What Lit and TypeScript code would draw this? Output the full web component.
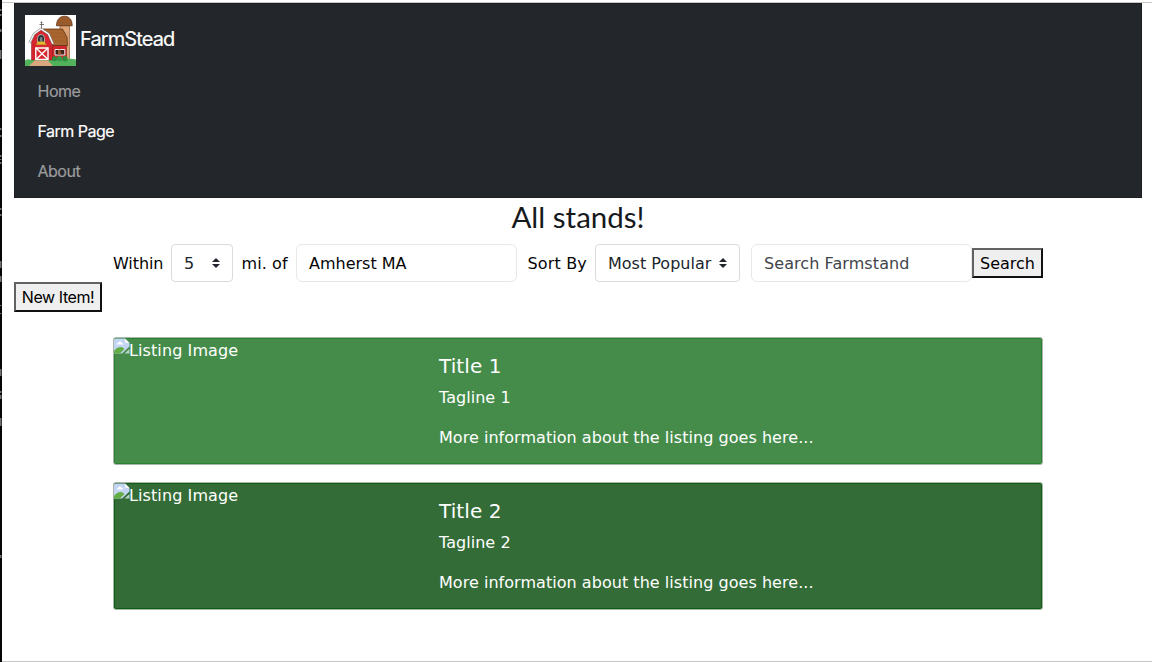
import { LitElement, html, css, svg } from "lit";
import { customElement, property } from "lit/decorators.js";

const barn = svg`
  <rect width="51" height="51" fill="#fff"/>
  <path d="M35 10h9.500v35H35z" fill="#dda577" stroke="#8a5a36" stroke-width=".7"/>
  <path d="M35 18h10M35 25h10M35 32h10" stroke="#c99468" stroke-width=".6"/>
  <path d="M31.500 10.800C31.500 4.500 35 1.200 39.500 1.200S47.200 4.500 47.200 10.800Z" fill="#9a5b2c" stroke="#5f3518" stroke-width=".8"/>
  <path d="M0 45.500Q3 43.500 6 45Q10 43 14 45H40Q44 43 51 44.500V51H0Z" fill="#52b35c"/>
  <path d="M27 30h14.500v14.500H27z" fill="#d0262c" stroke="#7d1a1d" stroke-width=".6"/>
  <path d="M18 14H37.500L42 22L42.500 30.500H28L24 19Z" fill="#a9652f" stroke="#5f3518" stroke-width=".8"/>
  <path d="M25 18h14M27 22h15M28 26h14" stroke="#9a5928" stroke-width=".5"/>
  <path d="M6.500 45V27L10 19L16 14.500L23 19L27.500 28V45Z" fill="#d8262e" stroke="#7d1a1d" stroke-width=".5"/>
  <path d="M9 28V44M25 30V44" stroke="#b91e25" stroke-width=".6"/>
  <path d="M4.500 28L9 19L16 13.800L23.500 19L28 29" fill="none" stroke="#777" stroke-width="2.300"/>
  <path d="M4.500 28L9 19L16 13.800L23.500 19L28 29" fill="none" stroke="#f4f4f4" stroke-width="1.500"/>
  <path d="M16.500 6.500v7M14.500 9.500h4.500M15.500 7.500h2" stroke="#666" stroke-width=".9"/>
  <path d="M12.500 28v-4.500q0-4 3.500-4t3.500 4V28Z" fill="#262a2c" stroke="#ddd" stroke-width=".7"/>
  <path d="M14.800 26.500v-3.500l1.200-1.500 1.500 1.500v3.500" fill="#75828d"/>
  <path d="M11 29.800l2-3.300h6l2.500 3.300Z" fill="#e4ba36" stroke="#a67c16" stroke-width=".4"/>
  <path d="M10.800 33h12.200v11.500H10.800Z" fill="#d8262e" stroke="#fff" stroke-width="1.400"/>
  <path d="M11 33l12 11.500M23 33L11 44.500" stroke="#fff" stroke-width="1.400"/>
  <path d="M30 34.500h9.800V40H30Z" fill="#3d2217" stroke="#eee" stroke-width="1"/>
  <path d="M33 35l2-.5 1 3 1 2h-4Z" fill="#9b5732"/>
  <circle cx="29.500" cy="43.700" r="2.500" fill="#2f8c3f"/><circle cx="34.500" cy="43.700" r="2.600" fill="#36984a"/><circle cx="40" cy="43.700" r="2.700" fill="#2f8c3f"/>
  <path d="M9.500 45.500H23L28 51H4Z" fill="#d9a67d"/>`;

@customElement("broken-image")
class BrokenImage extends LitElement {
  static styles = css`
    :host { display: block; width: 16px; height: 16px; flex: none; }
    .icon { display: block; }
  `;
  render() {
    return html`<svg class="icon" width="16" height="16" viewBox="0 0 16 16">
      <path d="M0 2Q0 .5 1.500 .5H11L15.500 5V8.500L8 15.500H0Z" fill="#c3d5f3"/>
      <path d="M0 15.500V13Q3 9 6.500 9Q9 9 10.500 11L6 15.500Z" fill="#62ae45"/>
      <path d="M2.500 6.500q0-1.500 1.500-1.500 .5-1.500 2-1.500t2 1.500q1.500 0 1.500 1.500Z" fill="#fff"/>
      <path d="M11 .5L15.500 5H12Q11 5 11 4Z" fill="#f7f7f7"/>
      <path d="M15.500 11V15.500H10.500Z" fill="#b5d3c5"/>
    </svg>`;
  }
}

@customElement("listing-card")
class ListingCard extends LitElement {
  @property({ type: Number }) index = 1;
  static styles = css`
    :host { display: block; }
    .card { box-sizing: border-box; height: 128px; border: 1px solid #a9b7aa; border-radius: 3px; background: #458c4a; box-shadow: inset 0 0 0 1px #2b8132; color: #fff; display: grid; grid-template-columns: 325px 1fr; }
    .dark { background: #346c37; box-shadow: inset 0 0 0 1px #0f5c13; }
    .picture { display: flex; }
    .alt { line-height: 26px; margin-left: -1px; letter-spacing: 0.1px; }
    .title { font-size: 20px; line-height: 24px; margin-top: 16px; letter-spacing: 0.1px; }
    .tagline { line-height: 24px; margin-top: 8px; letter-spacing: 0.04px; }
    .info { line-height: 24px; margin-top: 16px; letter-spacing: 0.04px; }
  `;
  render() {
    return html`<article class="card ${this.index % 2 ? "" : "dark"}">
      <div class="picture"><broken-image></broken-image><span class="alt">Listing Image</span></div>
      <div>
        <div class="title">Title ${this.index}</div>
        <div class="tagline">Tagline ${this.index}</div>
        <div class="info">More information about the listing goes here...</div>
      </div>
    </article>`;
  }
}

@customElement("app-root")
class AppRoot extends LitElement {
  static styles = css`
    :host { display: block; font: 16px "DejaVu Sans", sans-serif; color: #050505; }
    .frame { box-sizing: border-box; height: 662px; background: #fff; display: grid; grid-template-columns: 2px minmax(0, 1fr); }
    .edge { display: block; }
    .page { margin-top: 2px; border-top: 1px solid #c8c8c8; border-bottom: 1px solid #c8c8c8; padding: 0 10px 0 12px; }
    .nav { box-sizing: border-box; height: 195px; background: #23262b; border: 1px solid #1b1f23; padding: 11px 10px; font-family: Inter, sans-serif; color: #9c9d9f; }
    .brand { display: flex; align-items: center; height: 51px; gap: 4px; font-size: 20px; color: #fff; letter-spacing: -0.9px; }
    .brandname { padding-bottom: 3px; -webkit-text-stroke: 0.2px; }
    .logo { display: block; }
    .link { display: block; height: 40px; line-height: 40px; padding-left: 12.5px; letter-spacing: -0.5px; -webkit-text-stroke: 0.2px; }
    .first { margin-top: 5px; }
    .active { color: #fff; }
    .heading { margin: 0; height: 46px; font: 400 29.500px/38px Lato, sans-serif; text-align: center; color: #15191c; }
    .filters { display: flex; align-items: center; height: 38px; margin: 0 99px; white-space: nowrap; }
    .filters > * { flex: none; box-sizing: border-box; }
    .within { width: 58px; letter-spacing: -0.1px; }
    .of { width: 63px; padding-left: 8.500px; letter-spacing: 0.1px; }
    .sort { width: 78px; padding-left: 10.500px; letter-spacing: 0.15px; }
    .field { height: 38px; border: 1px solid #e6e8ea; border-radius: 6px; padding: 0 12px; display: flex; align-items: center; justify-content: space-between; }
    .select { border-color: #d8dbe0; border-radius: 4px; color: #20262c; }
    .miles { width: 62px; }
    .place { width: 221px; }
    .order { width: 145px; }
    .query { width: 221px; margin-left: 11px; color: #40454a; letter-spacing: 0.08px; }
    .btn { box-sizing: border-box; height: 30px; padding: 0; border: 2px solid; border-color: #626262 #111 #111 #626262; background: #efefef; color: #000; font: 16px "DejaVu Sans", sans-serif; }
    .search { width: 71px; }
    .new { display: block; width: 88px; font-family: Inter, sans-serif; letter-spacing: -0.42px; }
    .list { display: grid; gap: 17px; margin: 25px 99px 0; }
  `;
  edge() {
    const marks = [[9, 2], [14, 2], [29, 3], [50, 9], [128, 2], [135, 2], [155, 2], [159, 1], [162, 2], [208, 2], [214, 2], [261, 7], [276, 6], [305, 1], [313, 1], [369, 7], [391, 2], [395, 4], [418, 8], [555, 3]];
    return html`<svg class="edge" width="2" height="662"><rect width="2" height="662" fill="#050507"/>
      ${marks.map(([y, h]) => svg`<rect y=${y} width="1.5" height=${h} fill="#707073"/>`)}</svg>`;
  }
  arrows() {
    return html`<svg width="8" height="10" viewBox="0 0 8 10"><path d="M0 4L4 0L8 4ZM0 6H8L4 10Z" fill="#20262c"/></svg>`;
  }
  render() {
    return html`<div class="frame">${this.edge()}<main class="page">
      <nav class="nav">
        <div class="brand"><svg class="logo" width="51" height="51" viewBox="0 0 51 51">${barn}</svg><span class="brandname">FarmStead</span></div>
        <a class="link first">Home</a><a class="link active">Farm Page</a><a class="link">About</a>
      </nav>
      <h1 class="heading">All stands!</h1>
      <div class="filters">
        <span class="within">Within</span>
        <div class="field select miles"><span>5</span>${this.arrows()}</div>
        <span class="of">mi. of</span>
        <div class="field place">Amherst MA</div>
        <span class="sort">Sort By</span>
        <div class="field select order"><span>Most Popular</span>${this.arrows()}</div>
        <div class="field query">Search Farmstand</div>
        <button class="btn search">Search</button>
      </div>
      <button class="btn new">New Item!</button>
      <section class="list">
        <listing-card .index=${1}></listing-card>
        <listing-card .index=${2}></listing-card>
      </section>
    </main></div>`;
  }
}
